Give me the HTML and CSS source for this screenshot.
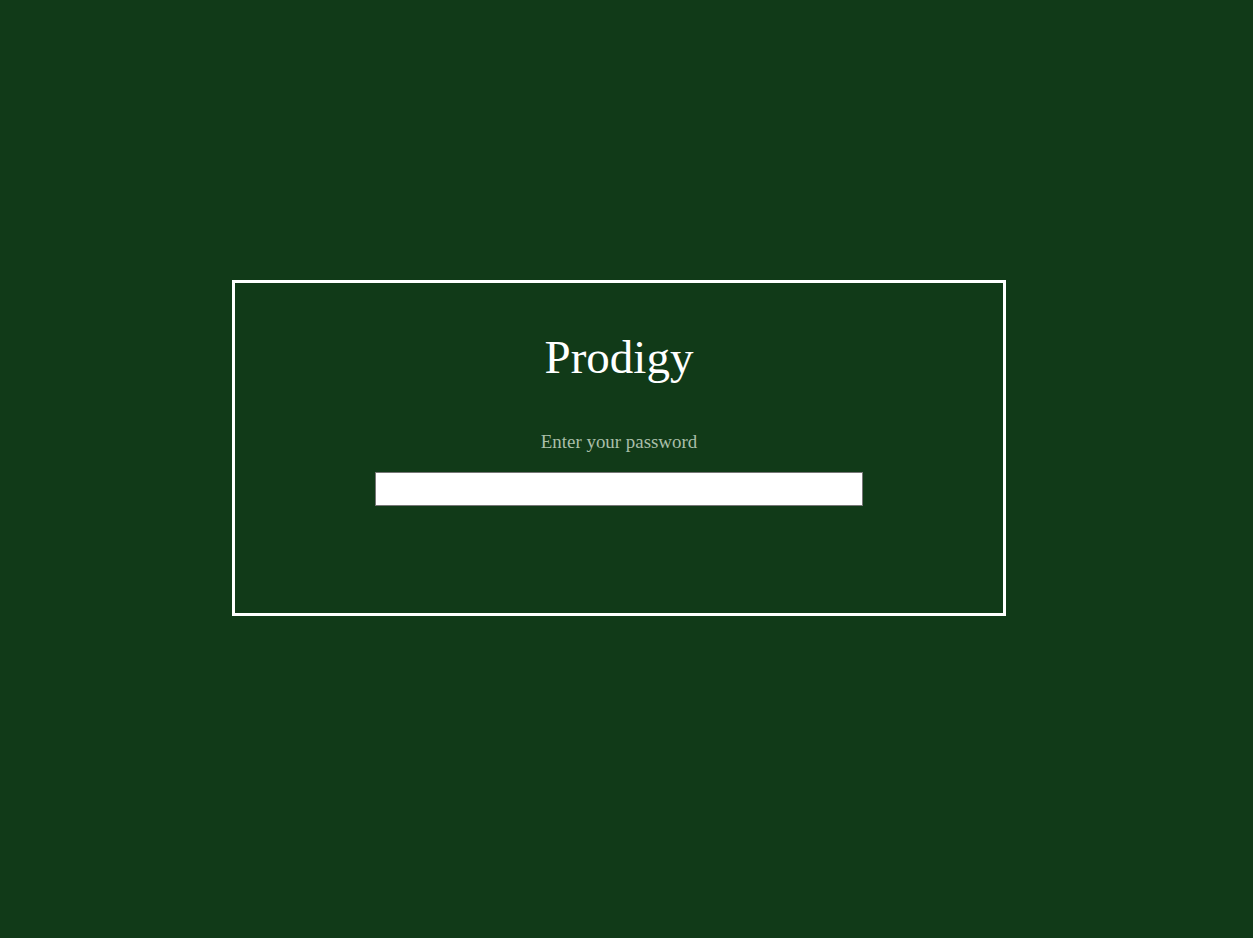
FILE: index.html
```html
<!DOCTYPE html>
<html lang="en">
<head>
<meta charset="utf-8">
<title>Prodigy</title>
<link rel="stylesheet" href="styles.css">
</head>
<body>
<div class="page">
  <div class="login-box">
    <h1 class="title">Prodigy</h1>
    <p class="label">Enter your password</p>
    <input class="password" type="password" aria-label="Password">
  </div>
</div>
</body>
</html>
```
FILE: styles.css
```css
html, body {
  margin: 0;
  padding: 0;
  background: #113a18;
  font-family: "Liberation Serif", "Times New Roman", serif;
}
.page {
  display: flex;
  justify-content: center;
  padding: 280px 15px 0 0;
}
.login-box {
  width: 768px;
  height: 330px;
  border: 3px solid #ffffff;
  display: flex;
  flex-direction: column;
  align-items: center;
  box-sizing: content-box;
}
.title {
  margin: 48px 0 0 0;
  font-size: 47px;
  font-weight: normal;
  color: #ffffff;
  line-height: 53px;
}
.label {
  margin: 47px 0 0 0;
  font-size: 18.9px;
  line-height: 21px;
  color: #a9bfa9;
}
.password {
  margin: 20px 0 0 0;
  width: 488px;
  height: 34px;
  box-sizing: border-box;
  border: 1px solid #767676;
  background: #ffffff;
  padding: 1px 2px;
}
```
